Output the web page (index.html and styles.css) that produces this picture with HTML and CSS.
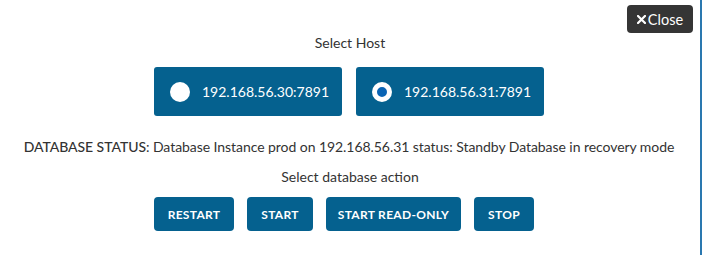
FILE: index.html
```html
<!DOCTYPE html>
<html>
<head>
<meta charset="utf-8">
<link rel="stylesheet" href="styles.css">
</head>
<body>
<div class="frame">
  <div class="dialog">
    <div class="topbar">
      <button class="close"><svg class="x" width="9" height="9" viewBox="0 0 9 9"><path d="M1 1 L8 8 M8 1 L1 8" stroke="#fff" stroke-width="2.2" stroke-linecap="square"/></svg>Close</button>
    </div>
    <div class="label host-label">Select Host</div>
    <div class="hosts">
      <label class="host"><span class="radio"></span><span>192.168.56.30:7891</span></label>
      <label class="host"><span class="radio checked"></span><span>192.168.56.31:7891</span></label>
    </div>
    <div class="status"><span class="status-key">DATABASE STATUS</span>: Database Instance prod on 192.168.56.31 status: Standby Database in recovery mode</div>
    <div class="label action-label">Select database action</div>
    <div class="actions">
      <button class="action w-restart">RESTART</button>
      <button class="action w-start">START</button>
      <button class="action w-ro">START READ-ONLY</button>
      <button class="action w-stop">STOP</button>
    </div>
  </div>
  <div class="edge"></div>
</div>
</body>
</html>
```
FILE: styles.css
```css
html, body {
  margin: 0;
  padding: 0;
  background: #fff;
}
body {
  font-family: Lato, "Open Sans", sans-serif;
  color: #333;
  width: 704px;
  height: 255px;
  overflow: hidden;
}
.frame {
  display: flex;
  height: 255px;
}
.dialog {
  width: 700px;
  display: flex;
  flex-direction: column;
  align-items: center;
}
.edge {
  width: 2px;
  background: #2a78b0;
  border-right: 2px solid #fff;
}
.topbar {
  align-self: stretch;
  display: flex;
  justify-content: flex-end;
  padding: 5px 7px 0 0;
  height: 28px;
}
.close {
  background: #353535;
  color: #fff;
  border: none;
  border-radius: 4px;
  font-family: Lato, sans-serif;
  font-size: 14.5px;
  height: 28px;
  width: 66px;
  padding: 0;
  display: flex;
  align-items: center;
  justify-content: center;
  gap: 2px;
}
.close .x {
  display: block;
}
.label {
  font-size: 14px;
  line-height: 18px;
}
.host-label {
  margin-top: 1px;
}
.hosts {
  display: flex;
  gap: 14px;
  margin-top: 15px;
  margin-right: 2px;
}
.host {
  width: 188px;
  height: 49px;
  box-sizing: border-box;
  background: #05618f;
  border-radius: 3px;
  color: #fff;
  font-size: 14px;
  display: flex;
  align-items: center;
  padding-left: 16px;
  gap: 12px;
}
.radio {
  width: 20px;
  height: 20px;
  border-radius: 50%;
  background: #fff;
  box-sizing: border-box;
}
.radio.checked {
  border: 5px solid #fff;
  background: #0a64b4;
}
.status {
  margin-top: 22px;
  font-size: 14px;
  line-height: 18px;
  letter-spacing: -0.06px;
  margin-right: 2px;
}
.status-key {
  font-weight: 500;
}
.action-label {
  margin-top: 12px;
}
.actions {
  display: flex;
  gap: 13px;
  margin-top: 11px;
  margin-right: 12px;
}
.action {
  background: #05618f;
  color: #fff;
  border: none;
  border-radius: 4px;
  height: 34px;
  font-family: Lato, sans-serif;
  font-weight: bold;
  font-size: 12px;
  letter-spacing: 0.3px;
  padding: 0;
}
.w-restart { width: 80px; }
.w-start { width: 66px; }
.w-ro { width: 135px; }
.w-stop { width: 60px; }
```
